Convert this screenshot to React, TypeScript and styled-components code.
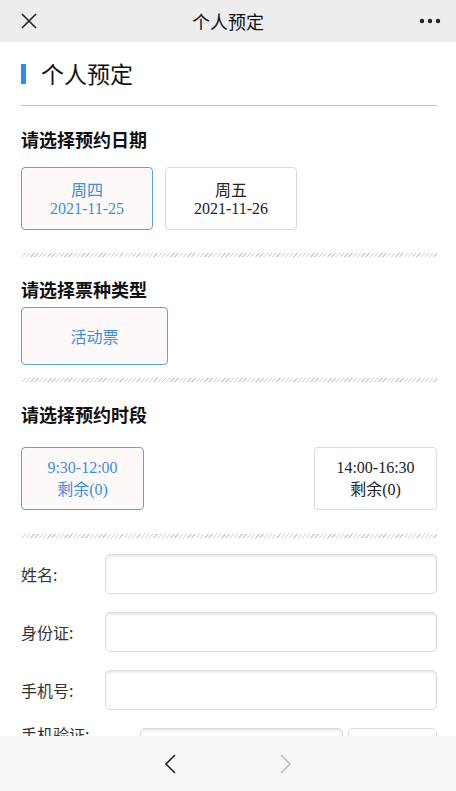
import React from 'react';
import styled, { createGlobalStyle } from 'styled-components';

const GlobalStyle = createGlobalStyle`
  html, body {
    margin: 0;
    padding: 0;
    height: 100%;
    background: #fff;
    font-family: "Noto Sans CJK SC", "Noto Sans", sans-serif;
  }
  #root {
    height: 100%;
  }
`;

const Page = styled.div`
  height: 791px;
  display: flex;
  flex-direction: column;
  overflow: hidden;
`;

const NavBar = styled.div`
  height: 42px;
  flex: none;
  background: #ededed;
  display: grid;
  grid-template-columns: 60px 1fr 60px;
  align-items: center;
`;

const NavTitle = styled.div`
  text-align: center;
  font-size: 18px;
  color: #111;
`;

const NavIcon = styled.div<{ align: 'left' | 'right' }>`
  display: flex;
  justify-content: ${({ align }) => (align === 'left' ? 'flex-start' : 'flex-end')};
  padding: ${({ align }) => (align === 'left' ? '0 0 0 21px' : '0 15px 0 0')};
`;

const Content = styled.div`
  flex: 1;
  overflow: hidden;
  padding: 0 19px 0 21px;
`;

const Header = styled.div`
  display: flex;
  align-items: center;
  gap: 15px;
  height: 63px;
  border-bottom: 1px solid #c4c4c4;
`;

const HeaderBar = styled.div`
  width: 5px;
  height: 20px;
  background: #2b8ef0;
`;

const HeaderTitle = styled.div`
  font-size: 23px;
  color: #111;
  margin-top: -2px;
`;

const SectionTitle = styled.div<{ top: number }>`
  font-size: 18px;
  font-weight: bold;
  color: #111;
  margin-top: ${({ top }) => top}px;
  line-height: 24px;
`;

const OptionRow = styled.div<{ spread?: boolean; top: number }>`
  display: flex;
  gap: 12px;
  justify-content: ${({ spread }) => (spread ? 'space-between' : 'flex-start')};
  margin-top: ${({ top }) => top}px;
`;

const Option = styled.div<{ selected?: boolean; w: number; h: number }>`
  box-sizing: border-box;
  width: ${({ w }) => w}px;
  height: ${({ h }) => h}px;
  border-radius: 4px;
  border: 1px solid ${({ selected }) => (selected ? '#5aa3e6' : '#dadada')};
  background: ${({ selected }) => (selected ? '#fdf9f8' : '#fff')};
  color: ${({ selected }) => (selected ? '#3d8fdc' : '#222')};
  display: flex;
  flex-direction: column;
  align-items: center;
  justify-content: center;
  font-family: "Liberation Serif", "Noto Sans CJK SC", serif;
  font-size: 16px;
  line-height: 20px;
`;

const SansLabel = styled.span`
  font-family: "Noto Sans CJK SC", sans-serif;
`;

const Hatch = styled.div<{ top: number }>`
  height: 4px;
  margin-top: ${({ top }) => top}px;
  background: repeating-linear-gradient(
    135deg,
    #cfcfcf 0px,
    #cfcfcf 1px,
    #fff 1px,
    #fff 3px
  );
`;

const FormRow = styled.div<{ top: number; alignTop?: boolean }>`
  display: flex;
  align-items: ${({ alignTop }) => (alignTop ? 'flex-start' : 'center')};
  margin-top: ${({ top }) => top}px;
`;

const Label = styled.div<{ w: number; raise?: number }>`
  width: ${({ w }) => w}px;
  flex: none;
  font-size: 16px;
  line-height: 22px;
  color: #333;
  margin-top: ${({ raise }) => (raise ? `-${raise}px` : '0')};
`;

const Input = styled.div<{ w?: number }>`
  box-sizing: border-box;
  height: 40px;
  flex: ${({ w }) => (w ? 'none' : '1')};
  width: ${({ w }) => (w ? `${w}px` : 'auto')};
  border: 1px solid #dcdcdc;
  border-radius: 5px;
  box-shadow: inset 0 2px 2px rgba(0, 0, 0, 0.08);
  background: #fff;
`;

const CodeButton = styled.div`
  box-sizing: border-box;
  height: 40px;
  flex: 1;
  margin-left: 5px;
  border: 1px solid #dcdcdc;
  border-radius: 5px;
  background: #fff;
`;

const BottomBar = styled.div`
  height: 55px;
  flex: none;
  background: #f6f6f6;
  display: flex;
  align-items: center;
  justify-content: center;
  gap: 90px;
`;

const CloseIcon = () => (
  <svg width="16" height="16" viewBox="0 0 16 16">
    <path d="M1 1L15 15M15 1L1 15" stroke="#222" strokeWidth="1.6" fill="none" />
  </svg>
);

const MoreIcon = () => (
  <svg width="22" height="6" viewBox="0 0 22 6">
    <circle cx="3" cy="3" r="2.2" fill="#222" />
    <circle cx="11" cy="3" r="2.2" fill="#222" />
    <circle cx="19" cy="3" r="2.2" fill="#222" />
  </svg>
);

const Chevron = ({ dir, color }: { dir: 'left' | 'right'; color: string }) => (
  <svg width="22" height="22" viewBox="0 0 22 22">
    <path
      d={dir === 'left' ? 'M14 2L5 11L14 20' : 'M8 2L17 11L8 20'}
      stroke={color}
      strokeWidth="1.6"
      fill="none"
    />
  </svg>
);

const dates = [
  { day: '周四', date: '2021-11-25', selected: true },
  { day: '周五', date: '2021-11-26', selected: false },
];

const slots = [
  { time: '9:30-12:00', selected: true },
  { time: '14:00-16:30', selected: false },
];

const fields = ['姓名:', '身份证:', '手机号:'];

export default function App() {
  return (
    <Page>
      <GlobalStyle />
      <NavBar>
        <NavIcon align="left">
          <CloseIcon />
        </NavIcon>
        <NavTitle>个人预定</NavTitle>
        <NavIcon align="right">
          <MoreIcon />
        </NavIcon>
      </NavBar>
      <Content>
        <Header>
          <HeaderBar />
          <HeaderTitle>个人预定</HeaderTitle>
        </Header>

        <SectionTitle top={21}>请选择预约日期</SectionTitle>
        <OptionRow top={16}>
          {dates.map((d) => (
            <Option key={d.date} selected={d.selected} w={132} h={63}>
              <SansLabel>{d.day}</SansLabel>
              <span>{d.date}</span>
            </Option>
          ))}
        </OptionRow>
        <Hatch top={23} />

        <SectionTitle top={20}>请选择票种类型</SectionTitle>
        <OptionRow top={6}>
          <Option selected w={147} h={58}>
            <SansLabel>活动票</SansLabel>
          </Option>
        </OptionRow>
        <Hatch top={13} />

        <SectionTitle top={20}>请选择预约时段</SectionTitle>
        <OptionRow spread top={21}>
          {slots.map((s) => (
            <Option key={s.time} selected={s.selected} w={123} h={63}>
              <span>{s.time}</span>
              <span>
                <SansLabel>剩余</SansLabel>(0)
              </span>
            </Option>
          ))}
        </OptionRow>
        <Hatch top={24} />

        {fields.map((f, i) => (
          <FormRow key={f} top={i === 0 ? 16 : 18}>
            <Label w={84}>{f}</Label>
            <Input />
          </FormRow>
        ))}
        <FormRow top={18} alignTop>
          <Label w={119} raise={5}>
            手机验证:
          </Label>
          <Input w={203} />
          <CodeButton />
        </FormRow>
      </Content>
      <BottomBar>
        <Chevron dir="left" color="#222" />
        <Chevron dir="right" color="#bbb" />
      </BottomBar>
    </Page>
  );
}
